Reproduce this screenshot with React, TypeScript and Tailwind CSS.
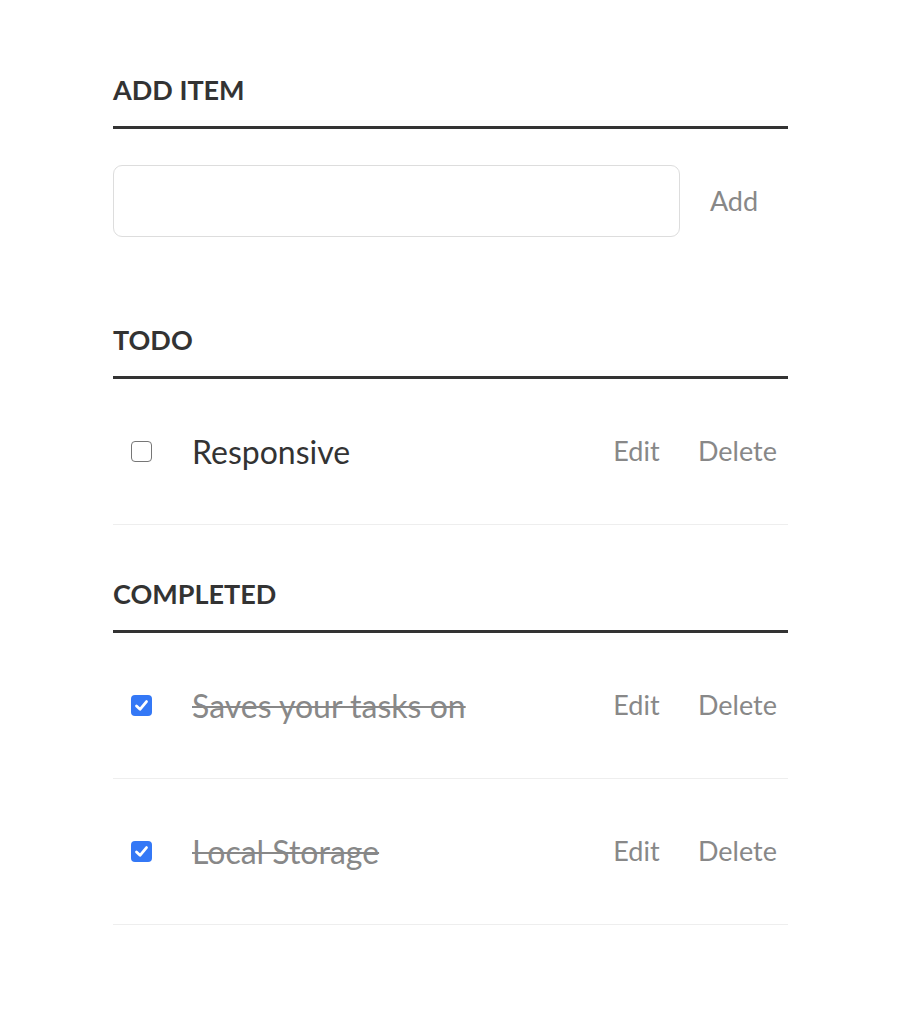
import { useState } from 'react';

type Task = { id: number; text: string; done: boolean };

const initialTasks: Task[] = [
    { id: 1, text: 'Responsive', done: false },
    { id: 2, text: 'Saves your tasks on', done: true },
    { id: 3, text: 'Local Storage', done: true },
];

const Heading = ({ children }: { children: React.ReactNode }) => (
    <h3 className="border-b-[3px] border-[#333] pb-[21px] text-[27px] leading-[30px] font-bold uppercase text-[#333]">
        {children}
    </h3>
);

const Checkbox = ({ checked, onChange }: { checked: boolean; onChange: () => void }) => (
    <button
        type="button"
        onClick={onChange}
        className={
            checked
                ? 'flex h-[21px] w-[21px] items-center justify-center rounded-[4px] bg-[#3478f6]'
                : 'flex h-[21px] w-[21px] items-center justify-center rounded-[4px] border-[1.5px] border-[#767676] bg-white'
        }
    >
        {checked && (
            <svg width="15" height="15" viewBox="0 0 15 15" fill="none">
                <path d="M2.5 8 L6 11.3 L12.5 3.6" stroke="white" strokeWidth="2.8" strokeLinecap="round" strokeLinejoin="round" />
            </svg>
        )}
    </button>
);

const TaskRow = ({ task, onToggle, onDelete }: { task: Task; onToggle: () => void; onDelete: () => void }) => (
    <li className="flex h-[146px] items-center border-b border-[#eee]">
        <div className="ml-[18px]">
            <Checkbox checked={task.done} onChange={onToggle} />
        </div>
        <span
            className={
                task.done
                    ? 'ml-[40px] flex-1 text-[32px] text-[#888] line-through decoration-[2px]'
                    : 'ml-[40px] flex-1 text-[32px] text-[#333]'
            }
        >
            {task.text}
        </span>
        <button className="w-[101px] text-[27px] text-[#888]">Edit</button>
        <button onClick={onDelete} className="w-[101px] text-[27px] text-[#888]">
            Delete
        </button>
    </li>
);

export default function App() {
    const [tasks, setTasks] = useState<Task[]>(initialTasks);
    const [draft, setDraft] = useState('');

    const toggle = (id: number) =>
        setTasks(tasks.map(t => (t.id === id ? { ...t, done: !t.done } : t)));
    const remove = (id: number) => setTasks(tasks.filter(t => t.id !== id));
    const add = () => {
        if (!draft.trim()) return;
        setTasks([...tasks, { id: Date.now(), text: draft.trim(), done: false }]);
        setDraft('');
    };

    const todo = tasks.filter(t => !t.done);
    const completed = tasks.filter(t => t.done);

    return (
        <div className="min-h-screen bg-white font-['Lato','Liberation_Sans',sans-serif]">
            <div className="ml-[113px] w-[675px] pt-[75px] pb-[90px]">
                <Heading>Add item</Heading>
                <div className="mt-[36px] flex items-center">
                    <input
                        type="text"
                        value={draft}
                        onChange={e => setDraft(e.target.value)}
                        className="h-[72px] w-[567px] rounded-[9px] border border-[#ddd] bg-white px-[17px] text-[30px] text-[#888] outline-none"
                    />
                    <button onClick={add} className="flex-1 text-[27px] text-[#888]">
                        Add
                    </button>
                </div>

                <div className="mt-[88px]">
                    <Heading>Todo</Heading>
                    <ul>
                        {todo.map(t => (
                            <TaskRow key={t.id} task={t} onToggle={() => toggle(t.id)} onDelete={() => remove(t.id)} />
                        ))}
                    </ul>
                </div>

                <div className="mt-[54px]">
                    <Heading>Completed</Heading>
                    <ul>
                        {completed.map(t => (
                            <TaskRow key={t.id} task={t} onToggle={() => toggle(t.id)} onDelete={() => remove(t.id)} />
                        ))}
                    </ul>
                </div>
            </div>
        </div>
    );
}
